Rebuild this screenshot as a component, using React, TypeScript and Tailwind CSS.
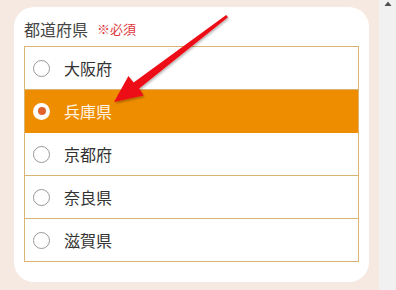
import React from "react";

const options = ["大阪府", "兵庫県", "京都府", "奈良県", "滋賀県"];

export default function App() {
  return (
    <div
      className="flex w-[396px] h-[290px] overflow-hidden bg-[#f5e9e1]"
      style={{ fontFamily: '"Noto Sans CJK JP", "Noto Sans", sans-serif' }}
    >
      <div className="relative flex-1 pt-[7px] pl-[14px] pr-[10px]">
        <div className="bg-white rounded-[20px] px-[10px] pt-[10px] pb-[20px]">
          <div className="flex items-center h-[24px] mb-[5px]">
            <span className="text-[16px] leading-[24px] text-[#444]">都道府県</span>
            <span className="ml-[9px] text-[13px] leading-[24px] text-[#e0383e]">※必須</span>
          </div>
          <div className="border-t border-x border-[#d9b472]">
            {options.map((o, i) => {
              const sel = i === 1;
              return (
                <div
                  key={o}
                  className={
                    "flex items-center h-[43px] border-b pl-[8px] " +
                    (sel ? "bg-[#ef8d00] border-[#ef8d00]" : "bg-white border-[#d9b472]")
                  }
                >
                  {sel ? (
                    <span className="flex items-center justify-center w-[17px] h-[17px] rounded-full bg-white">
                      <span className="w-[8px] h-[8px] rounded-full bg-[#e2622e]" />
                    </span>
                  ) : (
                    <span className="w-[17px] h-[17px] rounded-full border-[1.5px] border-[#999] bg-white" />
                  )}
                  <span
                    className={
                      "ml-[14px] text-[16px] leading-none " +
                      (sel ? "text-[#fff6e6]" : "text-[#333]")
                    }
                  >
                    {o}
                  </span>
                </div>
              );
            })}
          </div>
        </div>
        <svg
          className="absolute left-0 top-0 pointer-events-none"
          width="380"
          height="290"
          viewBox="0 0 380 290"
        >
          <defs>
            <filter id="sh" x="-20%" y="-20%" width="140%" height="140%">
              <feDropShadow dx="1" dy="1.5" stdDeviation="1.2" floodColor="#000" floodOpacity="0.3" />
            </filter>
          </defs>
          <polygon
            points="226.2,15 228,17.2 139.2,88.6 143.6,95.4 114,102 128.4,76 133.6,82.4"
            fill="#ec1118"
            filter="url(#sh)"
          />
        </svg>
      </div>
      <div className="relative w-[17px] bg-[#f1f1f1]">
        <svg className="absolute left-[5px] top-[1px]" width="8" height="6" viewBox="0 0 8 6">
          <polygon points="4,0.5 7.5,5 0.5,5" fill="#505050" />
        </svg>
      </div>
    </div>
  );
}
